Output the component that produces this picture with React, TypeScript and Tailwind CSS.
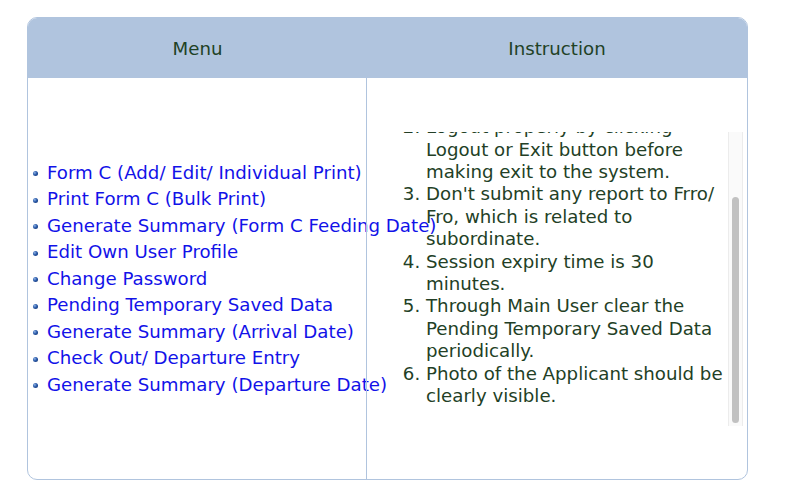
const menuItems = [
  "Form C (Add/ Edit/ Individual Print)",
  "Print Form C (Bulk Print)",
  "Generate Summary (Form C Feeding Date)",
  "Edit Own User Profile",
  "Change Password",
  "Pending Temporary Saved Data",
  "Generate Summary (Arrival Date)",
  "Check Out/ Departure Entry",
  "Generate Summary (Departure Date)",
];

const instructions = [
  "Logout properly by clicking Logout or Exit button before making exit to the system.",
  "Don't submit any report to Frro/ Fro, which is related to subordinate.",
  "Session expiry time is 30 minutes.",
  "Through Main User clear the Pending Temporary Saved Data periodically.",
  "Photo of the Applicant should be clearly visible.",
];

export default function App() {
  return (
    <div className="min-h-[501px] bg-white pl-[27px] pt-[17px] font-['DejaVu_Sans',Verdana,sans-serif] text-[18.2px]">
      <div className="flex h-[463px] w-[721px] flex-col overflow-hidden rounded-[10px] border border-[#b0c4de]">
        {/* header */}
        <div className="flex h-[60px] shrink-0 bg-[#b0c4de] pt-[2px] text-[#1f4226]">
          <div className="flex w-[339px] items-center justify-center">Menu</div>
          <div className="flex flex-1 items-center justify-center">Instruction</div>
        </div>

        <div className="flex flex-1">
          {/* menu column */}
          <div className="flex w-[338px] items-center">
            <ul className="pl-[5px] pt-[1px]">
              {menuItems.map((item) => (
                <li key={item} className="flex items-center whitespace-nowrap leading-[26.5px]">
                  <span className="mr-[9px] mt-[1px] h-[5px] w-[5px] shrink-0 rounded-full bg-[radial-gradient(circle_at_35%_35%,#8fb3e6_0%,#2a5aa8_45%,#0c2a66_100%)]" />
                  <a href="#" className="text-[#1212e8]">
                    {item}
                  </a>
                </li>
              ))}
            </ul>
          </div>

          {/* instruction column */}
          <div className="flex flex-1 items-center border-l border-[#b0c4de] pl-[19px] pr-[4px]">
            <div className="flex h-[294px] w-full overflow-hidden">
              <div className="flex-1 overflow-hidden">
                <ol
                  start={2}
                  className="mt-[-15.4px] list-outside list-decimal pl-[40px] pr-[5px] leading-[22.4px] text-[#233f26]"
                >
                  {instructions.map((text) => (
                    <li key={text}>{text}</li>
                  ))}
                </ol>
              </div>
              {/* scrollbar */}
              <div className="flex w-[15px] shrink-0 flex-col border-x border-[#ececec] bg-[#fafafa] px-[3px] pt-[65px] pb-[3px]">
                <div className="flex-1 rounded-full bg-[#c1c1c1]" />
              </div>
            </div>
          </div>
        </div>
      </div>
    </div>
  );
}
